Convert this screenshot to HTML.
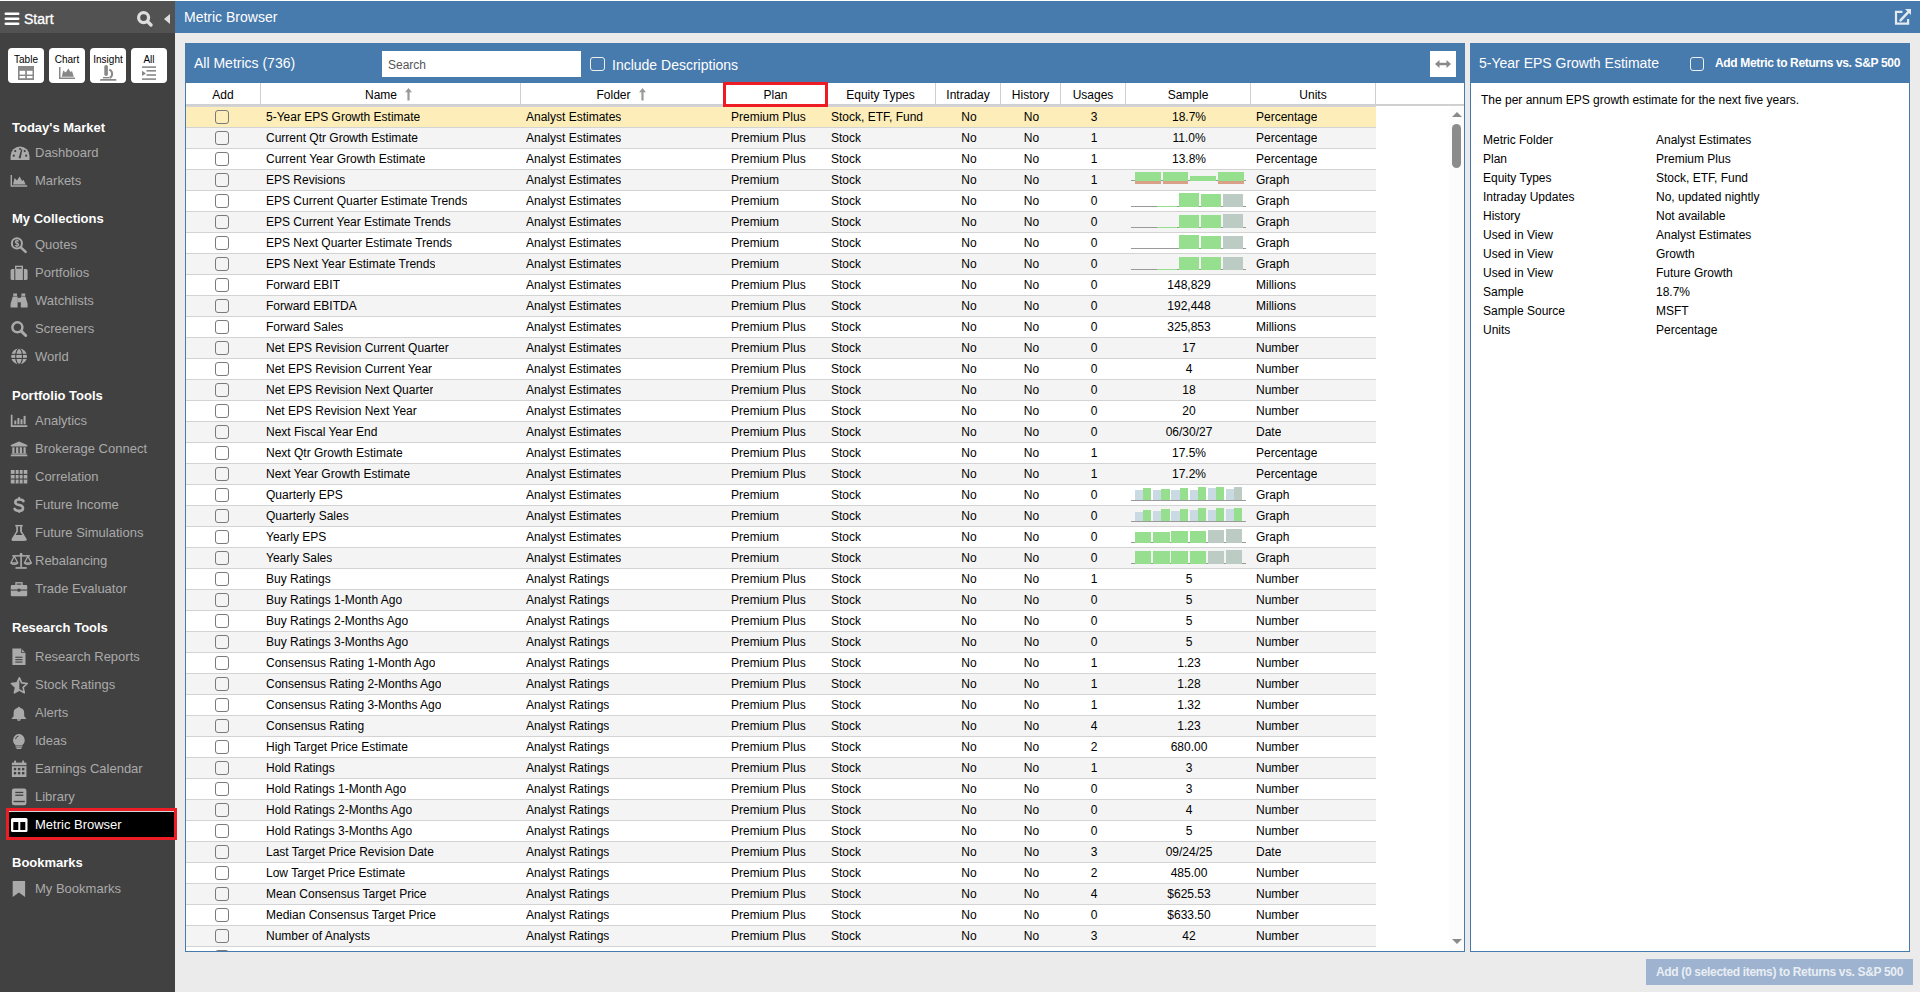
<!DOCTYPE html>
<html><head><meta charset="utf-8"><title>Metric Browser</title>
<style>
*{box-sizing:border-box}
html,body{margin:0;padding:0}
body{width:1920px;height:992px;overflow:hidden;background:#ebebeb;position:relative;font-family:"Liberation Sans",sans-serif;color:#222}
.a{position:absolute;white-space:nowrap}
#topline{position:absolute;left:0;top:0;width:1920px;height:1px;background:#fff}
#side{position:absolute;left:0;top:1px;width:175px;height:991px;background:#414141}
#sidehead{position:absolute;left:0;top:1px;width:175px;height:32px;background:#525252}
#titlebar{position:absolute;left:175px;top:1px;width:1745px;height:32px;background:#477aad}
.btn{position:absolute;top:48px;width:36px;height:35px;background:#fff;border-radius:4px}
.btn span{position:absolute;left:0;width:36px;top:6px;text-align:center;font-size:10px;line-height:12px;color:#000}
.btn svg{position:absolute;left:0;top:0}
.sh{position:absolute;left:12px;font-size:13px;font-weight:bold;color:#fff;line-height:15px}
.si{position:absolute;left:35px;font-size:13px;color:#aaa;line-height:15px}
.ic{position:absolute;left:0}
.panel{position:absolute;top:43px;height:909px;background:#fff;border:1px solid #477aad}
.phead{position:absolute;left:-1px;top:-1px;height:40px;background:#477aad}
.cb{position:absolute;width:14px;height:14px;border:1.5px solid #7a7a7a;border-radius:3px;background:transparent}
.cbw{position:absolute;width:15px;height:14px;border:1.5px solid #f0f0f0;border-radius:3px}
.row{position:absolute;left:186px;width:1190px;height:21px;border-bottom:1px solid #d3d3d3}
.c{position:absolute;top:0;height:20px;line-height:20px;font-size:12px;white-space:nowrap;overflow:hidden;color:#000}
.hd{position:absolute;top:85px;height:21px;line-height:21px;font-size:12px;text-align:center;color:#000}
.dv{position:absolute;top:83px;width:1px;height:21px;background:#cfcfcf}
.g{position:absolute;left:0;top:0}
.dl{position:absolute;left:1483px;font-size:12px;line-height:14px;color:#000}
.dr{position:absolute;left:1656px;font-size:12px;line-height:14px;color:#000}
</style></head><body>
<div id="topline"></div>
<div id="side"></div>
<div id="sidehead"></div>
<div id="titlebar"></div>

<svg class="a" style="left:4px;top:11px" width="16" height="15" viewBox="0 0 16 15">
<rect x="0.5" y="1.5" width="15" height="2.6" rx="1.3" fill="#fff"/><rect x="0.5" y="6.5" width="15" height="2.6" rx="1.3" fill="#fff"/><rect x="0.5" y="11.5" width="15" height="2.6" rx="1.3" fill="#fff"/></svg>
<div class="a" style="left:24px;top:11px;font-size:14px;line-height:16px;color:#fff;-webkit-text-stroke:0.3px #fff">Start</div>
<svg class="a" style="left:136px;top:10px" width="18" height="18" viewBox="0 0 18 18"><circle cx="7.6" cy="7.6" r="5" fill="none" stroke="#ddd" stroke-width="3.2"/><line x1="11.5" y1="11.5" x2="15" y2="15" stroke="#ddd" stroke-width="3.4" stroke-linecap="round"/></svg>
<svg class="a" style="left:163px;top:13px" width="8" height="12" viewBox="0 0 8 12"><path d="M7 1 L7 11 L1 6 Z" fill="#ddd"/></svg>

<div class="a" style="left:184px;top:9px;font-size:14px;line-height:16px;color:#fff">Metric Browser</div>
<svg class="a" style="left:1890px;top:5px" width="25" height="25" viewBox="0 0 25 25"><path d="M12.4 6.9 H6 V18.7 H18.1 V14" fill="none" stroke="#e3eaf2" stroke-width="2.2"/><path d="M15 4.1 H21 V9.9Z" fill="#e3eaf2"/><line x1="10.5" y1="15.3" x2="18" y2="7.3" stroke="#e3eaf2" stroke-width="2.5" stroke-linecap="round"/></svg>
<div class="btn" style="left:8px"><span>Table</span><svg width="36" height="35" viewBox="0 0 36 35"><rect x="10" y="18" width="16" height="14" fill="#888"/><rect x="11.6" y="22.8" width="5.6" height="3.8" fill="#fff"/><rect x="18.9" y="22.8" width="5.6" height="3.8" fill="#fff"/><rect x="11.6" y="28" width="5.6" height="2.2" fill="#fff"/><rect x="18.9" y="28" width="5.6" height="2.2" fill="#fff"/></svg></div>
<div class="btn" style="left:49px"><span>Chart</span><svg width="36" height="35" viewBox="0 0 36 35"><path d="M10 19 V31 H26 V29.6 H11.5 V19 Z" fill="#888"/><path d="M12.8 28.8 L14.2 22.5 L16.8 24.5 L19.3 20.5 L21.5 24 L23 23 L24.8 28.8 Z" fill="#888"/></svg></div>
<div class="btn" style="left:90px"><span>Insight</span><svg width="36" height="35" viewBox="0 0 36 35"><rect x="14.3" y="17" width="3.6" height="11" rx="1.8" fill="#888"/><path d="M19.3 21.6 A4.6 4.6 0 0 1 19.5 30" fill="none" stroke="#888" stroke-width="2"/><rect x="13" y="29" width="6" height="1.4" fill="#888"/><rect x="10" y="31" width="16.5" height="1.8" rx="0.9" fill="#888"/></svg></div>
<div class="btn" style="left:131px"><span>All</span><svg width="36" height="35" viewBox="0 0 36 35"><rect x="11" y="18.3" width="14" height="1.6" fill="#888"/><rect x="15.5" y="22" width="9.5" height="1.6" fill="#888"/><rect x="15.5" y="26.2" width="9.5" height="1.6" fill="#888"/><rect x="11" y="30.3" width="14" height="1.6" fill="#888"/><path d="M11 22.8 L15 25.4 L11 28Z" fill="#888"/></svg></div>
<div class="sh" style="top:120px">Today&#39;s Market</div>
<svg class="ic" style="top:142px" width="34" height="21" viewBox="0 -0.50 34 21"><path d="M10.6 17.5 V13.5 A9.45 9.45 0 0 1 29.5 13.5 V17.5 Z" fill="#aaa"/><circle cx="13.8" cy="13.2" r="1.1" fill="#414141"/><circle cx="15.3" cy="8.6" r="1.1" fill="#414141"/><circle cx="24.7" cy="8.6" r="1.1" fill="#414141"/><circle cx="26.2" cy="13.2" r="1.1" fill="#414141"/><circle cx="20" cy="6.5" r="1" fill="#414141"/><path d="M18.6 15.6 L21.2 6.8 L22.4 7.1 L20.6 16.1Z" fill="#414141"/></svg>
<div class="si" style="top:145px">Dashboard</div>
<svg class="ic" style="top:170px" width="34" height="21" viewBox="0 -0.50 34 21"><path d="M10.6 4.5 V16.3 H27.2 V14.8 H12 V4.5Z" fill="#aaa"/><path d="M13 14 L14.6 7.5 L17 10 L19.6 6 L22.2 10.6 L23.6 9.2 L25.6 14Z" fill="#aaa"/></svg>
<div class="si" style="top:173px">Markets</div>
<div class="sh" style="top:211px">My Collections</div>
<svg class="ic" style="top:234px" width="34" height="21" viewBox="0 -0.30 34 21"><circle cx="16.9" cy="9.1" r="5.05" fill="none" stroke="#aaa" stroke-width="2"/><line x1="20.6" y1="12.8" x2="25.6" y2="17.6" stroke="#aaa" stroke-width="2.6" stroke-linecap="round"/><path d="M18.6 7.2 Q18.2 6.4 16.9 6.4 Q15.4 6.4 15.4 7.6 Q15.4 8.6 16.9 8.9 Q18.6 9.3 18.6 10.5 Q18.6 11.8 16.9 11.8 Q15.5 11.8 15.1 11" fill="none" stroke="#aaa" stroke-width="1.2"/><rect x="16.45" y="5.3" width="0.9" height="7.6" fill="#aaa"/></svg>
<div class="si" style="top:237px">Quotes</div>
<svg class="ic" style="top:262px" width="34" height="21" viewBox="0 -0.30 34 21"><rect x="10.6" y="6.8" width="17" height="10.9" rx="1.6" fill="#aaa"/><rect x="15.7" y="4.1" width="6.6" height="3" fill="none" stroke="#aaa" stroke-width="1.4"/><rect x="14.3" y="6.8" width="1" height="10.9" fill="#414141"/><rect x="22.9" y="6.8" width="1" height="10.9" fill="#414141"/></svg>
<div class="si" style="top:265px">Portfolios</div>
<svg class="ic" style="top:290px" width="34" height="21" viewBox="0 -0.30 34 21"><rect x="13.2" y="3.2" width="3.8" height="2.4" fill="#aaa"/><rect x="21.4" y="3.2" width="3.8" height="2.4" fill="#aaa"/><path d="M12.8 6.2 H17.6 V17.3 H10.6 V13.4Z" fill="#aaa"/><path d="M20.8 6.2 H25.4 L27.6 13.4 V17.3 H20.8Z" fill="#aaa"/><rect x="17.4" y="7.6" width="3.6" height="4.4" fill="#aaa"/></svg>
<div class="si" style="top:293px">Watchlists</div>
<svg class="ic" style="top:318px" width="34" height="21" viewBox="0 -0.30 34 21"><circle cx="17.4" cy="9" r="5" fill="none" stroke="#aaa" stroke-width="2.5"/><line x1="21.2" y1="12.8" x2="25.7" y2="17.2" stroke="#aaa" stroke-width="3" stroke-linecap="round"/></svg>
<div class="si" style="top:321px">Screeners</div>
<svg class="ic" style="top:346px" width="34" height="21" viewBox="0 -0.50 34 21"><circle cx="19.1" cy="9.9" r="7.9" fill="#aaa"/><rect x="10" y="7.3" width="18" height="1.1" fill="#414141"/><rect x="10" y="11.4" width="18" height="1.1" fill="#414141"/><ellipse cx="19.1" cy="9.9" rx="3.4" ry="7.9" fill="none" stroke="#414141" stroke-width="1.1"/></svg>
<div class="si" style="top:349px">World</div>
<div class="sh" style="top:388px">Portfolio Tools</div>
<svg class="ic" style="top:410px" width="34" height="21" viewBox="0 -0.70 34 21"><path d="M10.8 4.1 V16.3 H27.3 V14.6 H12.5 V4.1Z" fill="#aaa"/><rect x="14.3" y="9.8" width="2" height="3.8" fill="#aaa"/><rect x="17.4" y="7.3" width="2" height="6.3" fill="#aaa"/><rect x="20.5" y="8.6" width="2" height="5" fill="#aaa"/><rect x="23.6" y="5.2" width="2" height="8.4" fill="#aaa"/></svg>
<div class="si" style="top:413px">Analytics</div>
<svg class="ic" style="top:438px" width="34" height="21" viewBox="0 -0.70 34 21"><path d="M19 2.8 L27.3 6.3 V7.7 H10.8 V6.3Z" fill="#aaa"/><rect x="12.3" y="8.6" width="2.2" height="5.8" fill="#aaa"/><rect x="16.1" y="8.6" width="2.2" height="5.8" fill="#aaa"/><rect x="19.8" y="8.6" width="2.2" height="5.8" fill="#aaa"/><rect x="23.5" y="8.6" width="2.2" height="5.8" fill="#aaa"/><rect x="11.5" y="14.6" width="15" height="1.2" fill="#aaa"/><rect x="10.8" y="16" width="16.5" height="1.6" fill="#aaa"/></svg>
<div class="si" style="top:441px">Brokerage Connect</div>
<svg class="ic" style="top:466px" width="34" height="21" viewBox="0 -0.70 34 21"><rect x="10.8" y="3.3" width="16.5" height="13.5" fill="#aaa"/><rect x="14.6" y="3" width="1.1" height="14" fill="#414141"/><rect x="18.6" y="3" width="1.1" height="14" fill="#414141"/><rect x="22.6" y="3" width="1.1" height="14" fill="#414141"/><rect x="10.5" y="7.2" width="17" height="1.1" fill="#414141"/><rect x="10.5" y="11.8" width="17" height="1.1" fill="#414141"/></svg>
<div class="si" style="top:469px">Correlation</div>
<svg class="ic" style="top:494px" width="34" height="21" viewBox="0 -0.70 34 21"><path d="M23.4 6.4 Q22.6 4.8 19.2 4.8 Q15.3 4.8 15.3 7.5 Q15.3 9.6 19.2 10.3 Q23 11 23 13.6 Q23 16.2 19.2 16.2 Q15.6 16.2 14.6 14.2" fill="none" stroke="#aaa" stroke-width="2.6" stroke-linecap="round"/><rect x="18.2" y="2" width="2" height="3" rx="1" fill="#aaa"/><rect x="18.2" y="15.6" width="2" height="2.8" rx="1" fill="#aaa"/></svg>
<div class="si" style="top:497px">Future Income</div>
<svg class="ic" style="top:522px" width="34" height="21" viewBox="0 -0.70 34 21"><rect x="15.3" y="2.2" width="7.4" height="1.7" fill="#aaa"/><path d="M16.3 3.9 H17.9 V8.6 L12 16.2 Q11.3 18.1 13.3 18.1 H24.7 Q26.7 18.1 26 16.2 L20.1 8.6 V3.9 H21.7 V8.6 L26.3 16 Q27.3 18.1 24.7 18.1" fill="#aaa"/><path d="M16.3 3.9 V8.6 L11.7 16 Q10.9 18.1 13.3 18.1 H24.7 Q27.1 18.1 26.3 16 L21.7 8.6 V3.9Z" fill="#aaa"/><path d="M17.9 3.9 V9 L15.5 12.2 H22.5 L20.1 9 V3.9Z" fill="#414141"/></svg>
<div class="si" style="top:525px">Future Simulations</div>
<svg class="ic" style="top:550px" width="34" height="21" viewBox="0 -0.70 34 21"><rect x="20.3" y="2.3" width="1.6" height="14" fill="#aaa"/><circle cx="21.1" cy="3.8" r="1.4" fill="#aaa"/><rect x="12.3" y="4.4" width="17.6" height="1.5" fill="#aaa"/><rect x="15.5" y="16.4" width="11.2" height="1.7" fill="#aaa"/><path d="M10.8 12.3 L14.3 5.6 L17.8 12.3 Q14.3 15.2 10.8 12.3Z" fill="none" stroke="#aaa" stroke-width="1.3" stroke-linejoin="round"/><path d="M24.4 12.3 L27.9 5.6 L31.4 12.3 Q27.9 15.2 24.4 12.3Z" fill="none" stroke="#aaa" stroke-width="1.3" stroke-linejoin="round"/><rect x="11" y="11.6" width="6.6" height="1.4" fill="#aaa"/><rect x="24.6" y="11.6" width="6.6" height="1.4" fill="#aaa"/></svg>
<div class="si" style="top:553px">Rebalancing</div>
<svg class="ic" style="top:578px" width="34" height="21" viewBox="0 -0.90 34 21"><rect x="10.8" y="6.2" width="16.4" height="11.1" rx="1" fill="#aaa"/><rect x="16" y="3.9" width="6" height="2.6" fill="none" stroke="#aaa" stroke-width="1.4"/><rect x="10.8" y="10.6" width="16.4" height="1.1" fill="#414141"/><rect x="17.6" y="9.8" width="2.8" height="2.9" fill="#414141"/></svg>
<div class="si" style="top:581px">Trade Evaluator</div>
<div class="sh" style="top:620px">Research Tools</div>
<svg class="ic" style="top:646px" width="34" height="21" viewBox="0 -0.70 34 21"><path d="M12.4 1.9 H21.2 L25.5 6.2 V18.3 H12.4Z" fill="#aaa"/><path d="M21.2 1.9 V6.2 H25.5Z" fill="#414141"/><path d="M21.9 2.7 L24.8 5.6 H21.9Z" fill="#aaa"/><rect x="15.3" y="10" width="7.2" height="1.1" fill="#414141"/><rect x="15.3" y="12.4" width="7.2" height="1.1" fill="#414141"/><rect x="15.3" y="14.8" width="7.2" height="1.1" fill="#414141"/></svg>
<div class="si" style="top:649px">Research Reports</div>
<svg class="ic" style="top:674px" width="34" height="21" viewBox="0 -0.60 34 21"><path d="M19.35 3.2 L21.7 8.3 L27.3 8.9 L23.1 12.7 L24.3 18.2 L19.35 15.4 L14.4 18.2 L15.6 12.7 L11.4 8.9 L17 8.3Z" fill="none" stroke="#aaa" stroke-width="1.6" stroke-linejoin="round"/><path d="M19.35 3.2 L17 8.3 L11.4 8.9 L15.6 12.7 L14.4 18.2 L19.35 15.4Z" fill="#aaa"/></svg>
<div class="si" style="top:677px">Stock Ratings</div>
<svg class="ic" style="top:702px" width="34" height="21" viewBox="0 -0.60 34 21"><path d="M18.9 4.1 Q19.9 4.1 20 5.2 Q24.2 6 24.2 10.6 V13.6 L26.5 16.4 H11.3 L13.6 13.6 V10.6 Q13.6 6 17.8 5.2 Q17.9 4.1 18.9 4.1Z" fill="#aaa"/><path d="M16.8 16.6 H21 Q20.6 18.4 18.9 18.4 Q17.2 18.4 16.8 16.6Z" fill="#aaa"/></svg>
<div class="si" style="top:705px">Alerts</div>
<svg class="ic" style="top:730px" width="34" height="21" viewBox="0 -0.60 34 21"><path d="M18.9 3.4 A6.2 6.2 0 0 1 22.6 14.2 V15 H15.2 V14.2 A6.2 6.2 0 0 1 18.9 3.4Z" fill="#aaa"/><path d="M15.6 8.6 A3.5 3.5 0 0 1 18.6 5.4" fill="none" stroke="#414141" stroke-width="1"/><rect x="15.5" y="15.6" width="6.8" height="1.3" rx="0.6" fill="#aaa"/><rect x="16.4" y="17.2" width="5" height="1.3" rx="0.6" fill="#aaa"/></svg>
<div class="si" style="top:733px">Ideas</div>
<svg class="ic" style="top:758px" width="34" height="21" viewBox="0 -0.60 34 21"><rect x="11.9" y="4" width="14.5" height="14.4" fill="#aaa"/><rect x="14.2" y="1.8" width="1.9" height="3.6" rx="0.6" fill="#aaa"/><rect x="22.2" y="1.8" width="1.9" height="3.6" rx="0.6" fill="#aaa"/><rect x="11.9" y="6.6" width="14.5" height="1" fill="#414141"/><rect x="13.8" y="9.3" width="2.4" height="2.4" fill="#414141"/><rect x="17.9" y="9.3" width="2.4" height="2.4" fill="#414141"/><rect x="22" y="9.3" width="2.4" height="2.4" fill="#414141"/><rect x="13.8" y="13.4" width="2.4" height="2.4" fill="#414141"/><rect x="17.9" y="13.4" width="2.4" height="2.4" fill="#414141"/><rect x="22" y="13.4" width="2.4" height="2.4" fill="#414141"/></svg>
<div class="si" style="top:761px">Earnings Calendar</div>
<svg class="ic" style="top:786px" width="34" height="21" viewBox="0 -0.60 34 21"><rect x="11.9" y="2" width="14.5" height="16.7" rx="2.2" fill="#aaa"/><rect x="15.3" y="5.2" width="8" height="1.3" fill="#414141"/><rect x="15.3" y="8" width="8" height="1.3" fill="#414141"/><rect x="13.6" y="14.2" width="11.2" height="1.4" fill="#414141"/></svg>
<div class="si" style="top:789px">Library</div>
<div class="a" style="left:6px;top:808px;width:171px;height:32px;border:3px solid #ee1c25;background:#000"><div style="position:absolute;left:0;top:0;width:165px;height:1px;background:#cfd8dc"></div></div>
<svg class="a" style="left:11px;top:818px" width="17" height="14" viewBox="0 0 17 14"><rect x="0" y="0" width="16.5" height="14" rx="1.5" fill="#fff"/><rect x="2.3" y="4" width="5" height="8" fill="#000"/><rect x="9.3" y="4" width="5" height="8" fill="#000"/></svg>
<div class="si" style="top:817px;color:#fff">Metric Browser</div>
<div class="sh" style="top:855px">Bookmarks</div>
<svg class="ic" style="top:878px" width="34" height="21" viewBox="0 -0.40 34 21"><path d="M12.7 2.6 H25.1 V18.6 L18.9 14.2 L12.7 18.6Z" fill="#aaa"/></svg>
<div class="si" style="top:881px">My Bookmarks</div>
<div class="panel" style="left:185px;width:1280px"></div>
<div class="a" style="left:185px;top:43px;width:1280px;height:40px;background:#477aad"></div>
<div class="a" style="left:194px;top:55px;font-size:14px;line-height:16px;color:#fff">All Metrics (736)</div>
<div class="a" style="left:382px;top:51px;width:199px;height:26px;background:#fff"></div>
<div class="a" style="left:388px;top:58px;font-size:12px;line-height:14px;color:#555">Search</div>
<div class="cbw" style="left:590px;top:57px"></div>
<div class="a" style="left:612px;top:57px;font-size:14px;line-height:16px;color:#fff">Include Descriptions</div>
<div class="a" style="left:1430px;top:51px;width:26px;height:26px;background:#fff"></div>
<svg class="a" style="left:1434px;top:58px" width="18" height="12" viewBox="0 0 18 12"><path d="M1 6 L5.5 2 V4.8 H12.5 V2 L17 6 L12.5 10 V7.2 H5.5 V10Z" fill="#8a8a8a"/></svg>
<div class="a" style="left:186px;top:83px;width:1278px;height:21px;background:#fff"></div>
<div class="a" style="left:186px;top:104px;width:1278px;height:2px;background:#d0d0d0"></div>
<div class="a" style="left:186px;top:106px;width:1190px;height:1px;background:#d4d5da"></div>
<div class="hd" style="left:186px;width:74px">Add</div>
<div class="dv" style="left:260px"></div>
<div class="hd" style="left:261px;width:259px">Name<span style="display:inline-block;width:19px;height:12px;position:relative"><svg style="position:absolute;left:8px;top:1px" width="8" height="13" viewBox="0 0 8 13"><path d="M3.5 0 L7 4.2 H4.6 V12.5 H2.4 V4.2 H0Z" fill="#999"/></svg></span></div>
<div class="dv" style="left:520px"></div>
<div class="hd" style="left:521px;width:204px">Folder<span style="display:inline-block;width:19px;height:12px;position:relative"><svg style="position:absolute;left:8px;top:1px" width="8" height="13" viewBox="0 0 8 13"><path d="M3.5 0 L7 4.2 H4.6 V12.5 H2.4 V4.2 H0Z" fill="#999"/></svg></span></div>
<div class="dv" style="left:725px"></div>
<div class="hd" style="left:726px;width:99px">Plan</div>
<div class="dv" style="left:825px"></div>
<div class="hd" style="left:826px;width:109px">Equity Types</div>
<div class="dv" style="left:935px"></div>
<div class="hd" style="left:936px;width:64px">Intraday</div>
<div class="dv" style="left:1000px"></div>
<div class="hd" style="left:1001px;width:59px">History</div>
<div class="dv" style="left:1060px"></div>
<div class="hd" style="left:1061px;width:64px">Usages</div>
<div class="dv" style="left:1125px"></div>
<div class="hd" style="left:1126px;width:124px">Sample</div>
<div class="dv" style="left:1250px"></div>
<div class="hd" style="left:1251px;width:124px">Units</div>
<div class="dv" style="left:1375px"></div>
<div class="row" style="top:107px;background:#fcedb9"><div class="cb" style="left:29px;top:3px"></div><div class="c" style="left:80px">5-Year EPS Growth Estimate</div><div class="c" style="left:340px">Analyst Estimates</div><div class="c" style="left:545px">Premium Plus</div><div class="c" style="left:645px">Stock, ETF, Fund</div><div class="c" style="left:751px;width:64px;text-align:center">No</div><div class="c" style="left:816px;width:59px;text-align:center">No</div><div class="c" style="left:876px;width:64px;text-align:center">3</div><div class="c" style="left:941px;width:124px;text-align:center">18.7%</div><div class="c" style="left:1070px">Percentage</div></div>
<div class="row" style="top:128px;background:#f4f4f4"><div class="cb" style="left:29px;top:3px"></div><div class="c" style="left:80px">Current Qtr Growth Estimate</div><div class="c" style="left:340px">Analyst Estimates</div><div class="c" style="left:545px">Premium Plus</div><div class="c" style="left:645px">Stock</div><div class="c" style="left:751px;width:64px;text-align:center">No</div><div class="c" style="left:816px;width:59px;text-align:center">No</div><div class="c" style="left:876px;width:64px;text-align:center">1</div><div class="c" style="left:941px;width:124px;text-align:center">11.0%</div><div class="c" style="left:1070px">Percentage</div></div>
<div class="row" style="top:149px;background:#fff"><div class="cb" style="left:29px;top:3px"></div><div class="c" style="left:80px">Current Year Growth Estimate</div><div class="c" style="left:340px">Analyst Estimates</div><div class="c" style="left:545px">Premium Plus</div><div class="c" style="left:645px">Stock</div><div class="c" style="left:751px;width:64px;text-align:center">No</div><div class="c" style="left:816px;width:59px;text-align:center">No</div><div class="c" style="left:876px;width:64px;text-align:center">1</div><div class="c" style="left:941px;width:124px;text-align:center">13.8%</div><div class="c" style="left:1070px">Percentage</div></div>
<div class="row" style="top:170px;background:#f4f4f4"><div class="cb" style="left:29px;top:3px"></div><div class="c" style="left:80px">EPS Revisions</div><div class="c" style="left:340px">Analyst Estimates</div><div class="c" style="left:545px">Premium</div><div class="c" style="left:645px">Stock</div><div class="c" style="left:751px;width:64px;text-align:center">No</div><div class="c" style="left:816px;width:59px;text-align:center">No</div><div class="c" style="left:876px;width:64px;text-align:center">1</div><div class="c" style="left:940px;width:124px;height:21px"><svg class="g" width="124" height="21" viewBox="0 0 124 21" shape-rendering="crispEdges"><rect x="5" y="10" width="115" height="1" fill="#9a9a9a"/><rect x="9" y="2" width="26" height="9" fill="#96df8e"/><rect x="9" y="11" width="26" height="3" fill="#d9a088"/><rect x="37" y="2" width="25" height="9" fill="#96df8e"/><rect x="37" y="11" width="25" height="3" fill="#d9a088"/><rect x="64" y="6" width="26" height="5" fill="#96df8e"/><rect x="92" y="2" width="26" height="9" fill="#96df8e"/><rect x="92" y="11" width="26" height="3" fill="#d9a088"/></svg></div><div class="c" style="left:1070px">Graph</div></div>
<div class="row" style="top:191px;background:#fff"><div class="cb" style="left:29px;top:3px"></div><div class="c" style="left:80px">EPS Current Quarter Estimate Trends</div><div class="c" style="left:340px">Analyst Estimates</div><div class="c" style="left:545px">Premium</div><div class="c" style="left:645px">Stock</div><div class="c" style="left:751px;width:64px;text-align:center">No</div><div class="c" style="left:816px;width:59px;text-align:center">No</div><div class="c" style="left:876px;width:64px;text-align:center">0</div><div class="c" style="left:940px;width:124px;height:21px"><svg class="g" width="124" height="21" viewBox="0 0 124 21" shape-rendering="crispEdges"><rect x="5" y="15" width="115" height="1" fill="#9a9a9a"/><rect x="31" y="15" width="20" height="1" fill="#96df8e"/><rect x="53" y="2" width="20" height="14" fill="#96df8e"/><rect x="75" y="3" width="20" height="13" fill="#96df8e"/><rect x="97" y="3" width="20" height="13" fill="#bccbc3"/></svg></div><div class="c" style="left:1070px">Graph</div></div>
<div class="row" style="top:212px;background:#f4f4f4"><div class="cb" style="left:29px;top:3px"></div><div class="c" style="left:80px">EPS Current Year Estimate Trends</div><div class="c" style="left:340px">Analyst Estimates</div><div class="c" style="left:545px">Premium</div><div class="c" style="left:645px">Stock</div><div class="c" style="left:751px;width:64px;text-align:center">No</div><div class="c" style="left:816px;width:59px;text-align:center">No</div><div class="c" style="left:876px;width:64px;text-align:center">0</div><div class="c" style="left:940px;width:124px;height:21px"><svg class="g" width="124" height="21" viewBox="0 0 124 21" shape-rendering="crispEdges"><rect x="5" y="15" width="115" height="1" fill="#9a9a9a"/><rect x="31" y="15" width="20" height="1" fill="#96df8e"/><rect x="53" y="3" width="20" height="13" fill="#96df8e"/><rect x="75" y="3" width="20" height="13" fill="#96df8e"/><rect x="97" y="2" width="20" height="14" fill="#bccbc3"/></svg></div><div class="c" style="left:1070px">Graph</div></div>
<div class="row" style="top:233px;background:#fff"><div class="cb" style="left:29px;top:3px"></div><div class="c" style="left:80px">EPS Next Quarter Estimate Trends</div><div class="c" style="left:340px">Analyst Estimates</div><div class="c" style="left:545px">Premium</div><div class="c" style="left:645px">Stock</div><div class="c" style="left:751px;width:64px;text-align:center">No</div><div class="c" style="left:816px;width:59px;text-align:center">No</div><div class="c" style="left:876px;width:64px;text-align:center">0</div><div class="c" style="left:940px;width:124px;height:21px"><svg class="g" width="124" height="21" viewBox="0 0 124 21" shape-rendering="crispEdges"><rect x="5" y="15" width="115" height="1" fill="#9a9a9a"/><rect x="53" y="2" width="20" height="14" fill="#96df8e"/><rect x="75" y="3" width="20" height="13" fill="#96df8e"/><rect x="97" y="3" width="20" height="13" fill="#bccbc3"/></svg></div><div class="c" style="left:1070px">Graph</div></div>
<div class="row" style="top:254px;background:#f4f4f4"><div class="cb" style="left:29px;top:3px"></div><div class="c" style="left:80px">EPS Next Year Estimate Trends</div><div class="c" style="left:340px">Analyst Estimates</div><div class="c" style="left:545px">Premium</div><div class="c" style="left:645px">Stock</div><div class="c" style="left:751px;width:64px;text-align:center">No</div><div class="c" style="left:816px;width:59px;text-align:center">No</div><div class="c" style="left:876px;width:64px;text-align:center">0</div><div class="c" style="left:940px;width:124px;height:21px"><svg class="g" width="124" height="21" viewBox="0 0 124 21" shape-rendering="crispEdges"><rect x="5" y="15" width="115" height="1" fill="#9a9a9a"/><rect x="31" y="15" width="20" height="1" fill="#96df8e"/><rect x="53" y="3" width="20" height="13" fill="#96df8e"/><rect x="75" y="3" width="20" height="13" fill="#96df8e"/><rect x="97" y="3" width="20" height="13" fill="#bccbc3"/></svg></div><div class="c" style="left:1070px">Graph</div></div>
<div class="row" style="top:275px;background:#fff"><div class="cb" style="left:29px;top:3px"></div><div class="c" style="left:80px">Forward EBIT</div><div class="c" style="left:340px">Analyst Estimates</div><div class="c" style="left:545px">Premium Plus</div><div class="c" style="left:645px">Stock</div><div class="c" style="left:751px;width:64px;text-align:center">No</div><div class="c" style="left:816px;width:59px;text-align:center">No</div><div class="c" style="left:876px;width:64px;text-align:center">0</div><div class="c" style="left:941px;width:124px;text-align:center">148,829</div><div class="c" style="left:1070px">Millions</div></div>
<div class="row" style="top:296px;background:#f4f4f4"><div class="cb" style="left:29px;top:3px"></div><div class="c" style="left:80px">Forward EBITDA</div><div class="c" style="left:340px">Analyst Estimates</div><div class="c" style="left:545px">Premium Plus</div><div class="c" style="left:645px">Stock</div><div class="c" style="left:751px;width:64px;text-align:center">No</div><div class="c" style="left:816px;width:59px;text-align:center">No</div><div class="c" style="left:876px;width:64px;text-align:center">0</div><div class="c" style="left:941px;width:124px;text-align:center">192,448</div><div class="c" style="left:1070px">Millions</div></div>
<div class="row" style="top:317px;background:#fff"><div class="cb" style="left:29px;top:3px"></div><div class="c" style="left:80px">Forward Sales</div><div class="c" style="left:340px">Analyst Estimates</div><div class="c" style="left:545px">Premium Plus</div><div class="c" style="left:645px">Stock</div><div class="c" style="left:751px;width:64px;text-align:center">No</div><div class="c" style="left:816px;width:59px;text-align:center">No</div><div class="c" style="left:876px;width:64px;text-align:center">0</div><div class="c" style="left:941px;width:124px;text-align:center">325,853</div><div class="c" style="left:1070px">Millions</div></div>
<div class="row" style="top:338px;background:#f4f4f4"><div class="cb" style="left:29px;top:3px"></div><div class="c" style="left:80px">Net EPS Revision Current Quarter</div><div class="c" style="left:340px">Analyst Estimates</div><div class="c" style="left:545px">Premium Plus</div><div class="c" style="left:645px">Stock</div><div class="c" style="left:751px;width:64px;text-align:center">No</div><div class="c" style="left:816px;width:59px;text-align:center">No</div><div class="c" style="left:876px;width:64px;text-align:center">0</div><div class="c" style="left:941px;width:124px;text-align:center">17</div><div class="c" style="left:1070px">Number</div></div>
<div class="row" style="top:359px;background:#fff"><div class="cb" style="left:29px;top:3px"></div><div class="c" style="left:80px">Net EPS Revision Current Year</div><div class="c" style="left:340px">Analyst Estimates</div><div class="c" style="left:545px">Premium Plus</div><div class="c" style="left:645px">Stock</div><div class="c" style="left:751px;width:64px;text-align:center">No</div><div class="c" style="left:816px;width:59px;text-align:center">No</div><div class="c" style="left:876px;width:64px;text-align:center">0</div><div class="c" style="left:941px;width:124px;text-align:center">4</div><div class="c" style="left:1070px">Number</div></div>
<div class="row" style="top:380px;background:#f4f4f4"><div class="cb" style="left:29px;top:3px"></div><div class="c" style="left:80px">Net EPS Revision Next Quarter</div><div class="c" style="left:340px">Analyst Estimates</div><div class="c" style="left:545px">Premium Plus</div><div class="c" style="left:645px">Stock</div><div class="c" style="left:751px;width:64px;text-align:center">No</div><div class="c" style="left:816px;width:59px;text-align:center">No</div><div class="c" style="left:876px;width:64px;text-align:center">0</div><div class="c" style="left:941px;width:124px;text-align:center">18</div><div class="c" style="left:1070px">Number</div></div>
<div class="row" style="top:401px;background:#fff"><div class="cb" style="left:29px;top:3px"></div><div class="c" style="left:80px">Net EPS Revision Next Year</div><div class="c" style="left:340px">Analyst Estimates</div><div class="c" style="left:545px">Premium Plus</div><div class="c" style="left:645px">Stock</div><div class="c" style="left:751px;width:64px;text-align:center">No</div><div class="c" style="left:816px;width:59px;text-align:center">No</div><div class="c" style="left:876px;width:64px;text-align:center">0</div><div class="c" style="left:941px;width:124px;text-align:center">20</div><div class="c" style="left:1070px">Number</div></div>
<div class="row" style="top:422px;background:#f4f4f4"><div class="cb" style="left:29px;top:3px"></div><div class="c" style="left:80px">Next Fiscal Year End</div><div class="c" style="left:340px">Analyst Estimates</div><div class="c" style="left:545px">Premium Plus</div><div class="c" style="left:645px">Stock</div><div class="c" style="left:751px;width:64px;text-align:center">No</div><div class="c" style="left:816px;width:59px;text-align:center">No</div><div class="c" style="left:876px;width:64px;text-align:center">0</div><div class="c" style="left:941px;width:124px;text-align:center">06/30/27</div><div class="c" style="left:1070px">Date</div></div>
<div class="row" style="top:443px;background:#fff"><div class="cb" style="left:29px;top:3px"></div><div class="c" style="left:80px">Next Qtr Growth Estimate</div><div class="c" style="left:340px">Analyst Estimates</div><div class="c" style="left:545px">Premium Plus</div><div class="c" style="left:645px">Stock</div><div class="c" style="left:751px;width:64px;text-align:center">No</div><div class="c" style="left:816px;width:59px;text-align:center">No</div><div class="c" style="left:876px;width:64px;text-align:center">1</div><div class="c" style="left:941px;width:124px;text-align:center">17.5%</div><div class="c" style="left:1070px">Percentage</div></div>
<div class="row" style="top:464px;background:#f4f4f4"><div class="cb" style="left:29px;top:3px"></div><div class="c" style="left:80px">Next Year Growth Estimate</div><div class="c" style="left:340px">Analyst Estimates</div><div class="c" style="left:545px">Premium Plus</div><div class="c" style="left:645px">Stock</div><div class="c" style="left:751px;width:64px;text-align:center">No</div><div class="c" style="left:816px;width:59px;text-align:center">No</div><div class="c" style="left:876px;width:64px;text-align:center">1</div><div class="c" style="left:941px;width:124px;text-align:center">17.2%</div><div class="c" style="left:1070px">Percentage</div></div>
<div class="row" style="top:485px;background:#fff"><div class="cb" style="left:29px;top:3px"></div><div class="c" style="left:80px">Quarterly EPS</div><div class="c" style="left:340px">Analyst Estimates</div><div class="c" style="left:545px">Premium</div><div class="c" style="left:645px">Stock</div><div class="c" style="left:751px;width:64px;text-align:center">No</div><div class="c" style="left:816px;width:59px;text-align:center">No</div><div class="c" style="left:876px;width:64px;text-align:center">0</div><div class="c" style="left:940px;width:124px;height:21px"><svg class="g" width="124" height="21" viewBox="0 0 124 21" shape-rendering="crispEdges"><rect x="5" y="15" width="115" height="1" fill="#9a9a9a"/><rect x="9" y="5" width="8" height="10" fill="#c9dae3"/><rect x="17" y="3" width="8" height="12" fill="#96df8e"/><rect x="27" y="5" width="8" height="10" fill="#c9dae3"/><rect x="35" y="4" width="9" height="11" fill="#96df8e"/><rect x="45" y="5" width="9" height="10" fill="#c9dae3"/><rect x="54" y="3" width="8" height="12" fill="#96df8e"/><rect x="64" y="5" width="8" height="10" fill="#c9dae3"/><rect x="72" y="2" width="8" height="13" fill="#96df8e"/><rect x="82" y="3" width="8" height="12" fill="#c9dae3"/><rect x="90" y="2" width="8" height="13" fill="#96df8e"/><rect x="100" y="4" width="8" height="11" fill="#c9dae3"/><rect x="108" y="2" width="8" height="13" fill="#bccbc3"/></svg></div><div class="c" style="left:1070px">Graph</div></div>
<div class="row" style="top:506px;background:#f4f4f4"><div class="cb" style="left:29px;top:3px"></div><div class="c" style="left:80px">Quarterly Sales</div><div class="c" style="left:340px">Analyst Estimates</div><div class="c" style="left:545px">Premium</div><div class="c" style="left:645px">Stock</div><div class="c" style="left:751px;width:64px;text-align:center">No</div><div class="c" style="left:816px;width:59px;text-align:center">No</div><div class="c" style="left:876px;width:64px;text-align:center">0</div><div class="c" style="left:940px;width:124px;height:21px"><svg class="g" width="124" height="21" viewBox="0 0 124 21" shape-rendering="crispEdges"><rect x="5" y="15" width="115" height="1" fill="#9a9a9a"/><rect x="9" y="6" width="8" height="9" fill="#c9dae3"/><rect x="17" y="4" width="8" height="11" fill="#96df8e"/><rect x="27" y="5" width="8" height="10" fill="#c9dae3"/><rect x="35" y="3" width="9" height="12" fill="#96df8e"/><rect x="45" y="5" width="9" height="10" fill="#c9dae3"/><rect x="54" y="3" width="8" height="12" fill="#96df8e"/><rect x="64" y="4" width="8" height="11" fill="#c9dae3"/><rect x="72" y="2" width="8" height="13" fill="#96df8e"/><rect x="82" y="4" width="8" height="11" fill="#c9dae3"/><rect x="90" y="2" width="8" height="13" fill="#96df8e"/><rect x="100" y="3" width="8" height="12" fill="#c9dae3"/><rect x="108" y="2" width="8" height="13" fill="#96df8e"/></svg></div><div class="c" style="left:1070px">Graph</div></div>
<div class="row" style="top:527px;background:#fff"><div class="cb" style="left:29px;top:3px"></div><div class="c" style="left:80px">Yearly EPS</div><div class="c" style="left:340px">Analyst Estimates</div><div class="c" style="left:545px">Premium</div><div class="c" style="left:645px">Stock</div><div class="c" style="left:751px;width:64px;text-align:center">No</div><div class="c" style="left:816px;width:59px;text-align:center">No</div><div class="c" style="left:876px;width:64px;text-align:center">0</div><div class="c" style="left:940px;width:124px;height:21px"><svg class="g" width="124" height="21" viewBox="0 0 124 21" shape-rendering="crispEdges"><rect x="5" y="15" width="115" height="1" fill="#9a9a9a"/><rect x="9" y="5" width="16" height="11" fill="#96df8e"/><rect x="27" y="5" width="17" height="11" fill="#96df8e"/><rect x="45" y="4" width="17" height="12" fill="#96df8e"/><rect x="64" y="4" width="16" height="12" fill="#96df8e"/><rect x="82" y="3" width="16" height="13" fill="#bccbc3"/><rect x="100" y="2" width="16" height="14" fill="#bccbc3"/></svg></div><div class="c" style="left:1070px">Graph</div></div>
<div class="row" style="top:548px;background:#f4f4f4"><div class="cb" style="left:29px;top:3px"></div><div class="c" style="left:80px">Yearly Sales</div><div class="c" style="left:340px">Analyst Estimates</div><div class="c" style="left:545px">Premium</div><div class="c" style="left:645px">Stock</div><div class="c" style="left:751px;width:64px;text-align:center">No</div><div class="c" style="left:816px;width:59px;text-align:center">No</div><div class="c" style="left:876px;width:64px;text-align:center">0</div><div class="c" style="left:940px;width:124px;height:21px"><svg class="g" width="124" height="21" viewBox="0 0 124 21" shape-rendering="crispEdges"><rect x="5" y="15" width="115" height="1" fill="#9a9a9a"/><rect x="9" y="3" width="16" height="13" fill="#96df8e"/><rect x="27" y="3" width="17" height="13" fill="#96df8e"/><rect x="45" y="3" width="17" height="13" fill="#96df8e"/><rect x="64" y="3" width="16" height="13" fill="#96df8e"/><rect x="82" y="3" width="16" height="13" fill="#bccbc3"/><rect x="100" y="2" width="16" height="14" fill="#bccbc3"/></svg></div><div class="c" style="left:1070px">Graph</div></div>
<div class="row" style="top:569px;background:#fff"><div class="cb" style="left:29px;top:3px"></div><div class="c" style="left:80px">Buy Ratings</div><div class="c" style="left:340px">Analyst Ratings</div><div class="c" style="left:545px">Premium Plus</div><div class="c" style="left:645px">Stock</div><div class="c" style="left:751px;width:64px;text-align:center">No</div><div class="c" style="left:816px;width:59px;text-align:center">No</div><div class="c" style="left:876px;width:64px;text-align:center">1</div><div class="c" style="left:941px;width:124px;text-align:center">5</div><div class="c" style="left:1070px">Number</div></div>
<div class="row" style="top:590px;background:#f4f4f4"><div class="cb" style="left:29px;top:3px"></div><div class="c" style="left:80px">Buy Ratings 1-Month Ago</div><div class="c" style="left:340px">Analyst Ratings</div><div class="c" style="left:545px">Premium Plus</div><div class="c" style="left:645px">Stock</div><div class="c" style="left:751px;width:64px;text-align:center">No</div><div class="c" style="left:816px;width:59px;text-align:center">No</div><div class="c" style="left:876px;width:64px;text-align:center">0</div><div class="c" style="left:941px;width:124px;text-align:center">5</div><div class="c" style="left:1070px">Number</div></div>
<div class="row" style="top:611px;background:#fff"><div class="cb" style="left:29px;top:3px"></div><div class="c" style="left:80px">Buy Ratings 2-Months Ago</div><div class="c" style="left:340px">Analyst Ratings</div><div class="c" style="left:545px">Premium Plus</div><div class="c" style="left:645px">Stock</div><div class="c" style="left:751px;width:64px;text-align:center">No</div><div class="c" style="left:816px;width:59px;text-align:center">No</div><div class="c" style="left:876px;width:64px;text-align:center">0</div><div class="c" style="left:941px;width:124px;text-align:center">5</div><div class="c" style="left:1070px">Number</div></div>
<div class="row" style="top:632px;background:#f4f4f4"><div class="cb" style="left:29px;top:3px"></div><div class="c" style="left:80px">Buy Ratings 3-Months Ago</div><div class="c" style="left:340px">Analyst Ratings</div><div class="c" style="left:545px">Premium Plus</div><div class="c" style="left:645px">Stock</div><div class="c" style="left:751px;width:64px;text-align:center">No</div><div class="c" style="left:816px;width:59px;text-align:center">No</div><div class="c" style="left:876px;width:64px;text-align:center">0</div><div class="c" style="left:941px;width:124px;text-align:center">5</div><div class="c" style="left:1070px">Number</div></div>
<div class="row" style="top:653px;background:#fff"><div class="cb" style="left:29px;top:3px"></div><div class="c" style="left:80px">Consensus Rating 1-Month Ago</div><div class="c" style="left:340px">Analyst Ratings</div><div class="c" style="left:545px">Premium Plus</div><div class="c" style="left:645px">Stock</div><div class="c" style="left:751px;width:64px;text-align:center">No</div><div class="c" style="left:816px;width:59px;text-align:center">No</div><div class="c" style="left:876px;width:64px;text-align:center">1</div><div class="c" style="left:941px;width:124px;text-align:center">1.23</div><div class="c" style="left:1070px">Number</div></div>
<div class="row" style="top:674px;background:#f4f4f4"><div class="cb" style="left:29px;top:3px"></div><div class="c" style="left:80px">Consensus Rating 2-Months Ago</div><div class="c" style="left:340px">Analyst Ratings</div><div class="c" style="left:545px">Premium Plus</div><div class="c" style="left:645px">Stock</div><div class="c" style="left:751px;width:64px;text-align:center">No</div><div class="c" style="left:816px;width:59px;text-align:center">No</div><div class="c" style="left:876px;width:64px;text-align:center">1</div><div class="c" style="left:941px;width:124px;text-align:center">1.28</div><div class="c" style="left:1070px">Number</div></div>
<div class="row" style="top:695px;background:#fff"><div class="cb" style="left:29px;top:3px"></div><div class="c" style="left:80px">Consensus Rating 3-Months Ago</div><div class="c" style="left:340px">Analyst Ratings</div><div class="c" style="left:545px">Premium Plus</div><div class="c" style="left:645px">Stock</div><div class="c" style="left:751px;width:64px;text-align:center">No</div><div class="c" style="left:816px;width:59px;text-align:center">No</div><div class="c" style="left:876px;width:64px;text-align:center">1</div><div class="c" style="left:941px;width:124px;text-align:center">1.32</div><div class="c" style="left:1070px">Number</div></div>
<div class="row" style="top:716px;background:#f4f4f4"><div class="cb" style="left:29px;top:3px"></div><div class="c" style="left:80px">Consensus Rating</div><div class="c" style="left:340px">Analyst Ratings</div><div class="c" style="left:545px">Premium Plus</div><div class="c" style="left:645px">Stock</div><div class="c" style="left:751px;width:64px;text-align:center">No</div><div class="c" style="left:816px;width:59px;text-align:center">No</div><div class="c" style="left:876px;width:64px;text-align:center">4</div><div class="c" style="left:941px;width:124px;text-align:center">1.23</div><div class="c" style="left:1070px">Number</div></div>
<div class="row" style="top:737px;background:#fff"><div class="cb" style="left:29px;top:3px"></div><div class="c" style="left:80px">High Target Price Estimate</div><div class="c" style="left:340px">Analyst Ratings</div><div class="c" style="left:545px">Premium Plus</div><div class="c" style="left:645px">Stock</div><div class="c" style="left:751px;width:64px;text-align:center">No</div><div class="c" style="left:816px;width:59px;text-align:center">No</div><div class="c" style="left:876px;width:64px;text-align:center">2</div><div class="c" style="left:941px;width:124px;text-align:center">680.00</div><div class="c" style="left:1070px">Number</div></div>
<div class="row" style="top:758px;background:#f4f4f4"><div class="cb" style="left:29px;top:3px"></div><div class="c" style="left:80px">Hold Ratings</div><div class="c" style="left:340px">Analyst Ratings</div><div class="c" style="left:545px">Premium Plus</div><div class="c" style="left:645px">Stock</div><div class="c" style="left:751px;width:64px;text-align:center">No</div><div class="c" style="left:816px;width:59px;text-align:center">No</div><div class="c" style="left:876px;width:64px;text-align:center">1</div><div class="c" style="left:941px;width:124px;text-align:center">3</div><div class="c" style="left:1070px">Number</div></div>
<div class="row" style="top:779px;background:#fff"><div class="cb" style="left:29px;top:3px"></div><div class="c" style="left:80px">Hold Ratings 1-Month Ago</div><div class="c" style="left:340px">Analyst Ratings</div><div class="c" style="left:545px">Premium Plus</div><div class="c" style="left:645px">Stock</div><div class="c" style="left:751px;width:64px;text-align:center">No</div><div class="c" style="left:816px;width:59px;text-align:center">No</div><div class="c" style="left:876px;width:64px;text-align:center">0</div><div class="c" style="left:941px;width:124px;text-align:center">3</div><div class="c" style="left:1070px">Number</div></div>
<div class="row" style="top:800px;background:#f4f4f4"><div class="cb" style="left:29px;top:3px"></div><div class="c" style="left:80px">Hold Ratings 2-Months Ago</div><div class="c" style="left:340px">Analyst Ratings</div><div class="c" style="left:545px">Premium Plus</div><div class="c" style="left:645px">Stock</div><div class="c" style="left:751px;width:64px;text-align:center">No</div><div class="c" style="left:816px;width:59px;text-align:center">No</div><div class="c" style="left:876px;width:64px;text-align:center">0</div><div class="c" style="left:941px;width:124px;text-align:center">4</div><div class="c" style="left:1070px">Number</div></div>
<div class="row" style="top:821px;background:#fff"><div class="cb" style="left:29px;top:3px"></div><div class="c" style="left:80px">Hold Ratings 3-Months Ago</div><div class="c" style="left:340px">Analyst Ratings</div><div class="c" style="left:545px">Premium Plus</div><div class="c" style="left:645px">Stock</div><div class="c" style="left:751px;width:64px;text-align:center">No</div><div class="c" style="left:816px;width:59px;text-align:center">No</div><div class="c" style="left:876px;width:64px;text-align:center">0</div><div class="c" style="left:941px;width:124px;text-align:center">5</div><div class="c" style="left:1070px">Number</div></div>
<div class="row" style="top:842px;background:#f4f4f4"><div class="cb" style="left:29px;top:3px"></div><div class="c" style="left:80px">Last Target Price Revision Date</div><div class="c" style="left:340px">Analyst Ratings</div><div class="c" style="left:545px">Premium Plus</div><div class="c" style="left:645px">Stock</div><div class="c" style="left:751px;width:64px;text-align:center">No</div><div class="c" style="left:816px;width:59px;text-align:center">No</div><div class="c" style="left:876px;width:64px;text-align:center">3</div><div class="c" style="left:941px;width:124px;text-align:center">09/24/25</div><div class="c" style="left:1070px">Date</div></div>
<div class="row" style="top:863px;background:#fff"><div class="cb" style="left:29px;top:3px"></div><div class="c" style="left:80px">Low Target Price Estimate</div><div class="c" style="left:340px">Analyst Ratings</div><div class="c" style="left:545px">Premium Plus</div><div class="c" style="left:645px">Stock</div><div class="c" style="left:751px;width:64px;text-align:center">No</div><div class="c" style="left:816px;width:59px;text-align:center">No</div><div class="c" style="left:876px;width:64px;text-align:center">2</div><div class="c" style="left:941px;width:124px;text-align:center">485.00</div><div class="c" style="left:1070px">Number</div></div>
<div class="row" style="top:884px;background:#f4f4f4"><div class="cb" style="left:29px;top:3px"></div><div class="c" style="left:80px">Mean Consensus Target Price</div><div class="c" style="left:340px">Analyst Ratings</div><div class="c" style="left:545px">Premium Plus</div><div class="c" style="left:645px">Stock</div><div class="c" style="left:751px;width:64px;text-align:center">No</div><div class="c" style="left:816px;width:59px;text-align:center">No</div><div class="c" style="left:876px;width:64px;text-align:center">4</div><div class="c" style="left:941px;width:124px;text-align:center">$625.53</div><div class="c" style="left:1070px">Number</div></div>
<div class="row" style="top:905px;background:#fff"><div class="cb" style="left:29px;top:3px"></div><div class="c" style="left:80px">Median Consensus Target Price</div><div class="c" style="left:340px">Analyst Ratings</div><div class="c" style="left:545px">Premium Plus</div><div class="c" style="left:645px">Stock</div><div class="c" style="left:751px;width:64px;text-align:center">No</div><div class="c" style="left:816px;width:59px;text-align:center">No</div><div class="c" style="left:876px;width:64px;text-align:center">0</div><div class="c" style="left:941px;width:124px;text-align:center">$633.50</div><div class="c" style="left:1070px">Number</div></div>
<div class="row" style="top:926px;background:#f4f4f4"><div class="cb" style="left:29px;top:3px"></div><div class="c" style="left:80px">Number of Analysts</div><div class="c" style="left:340px">Analyst Ratings</div><div class="c" style="left:545px">Premium Plus</div><div class="c" style="left:645px">Stock</div><div class="c" style="left:751px;width:64px;text-align:center">No</div><div class="c" style="left:816px;width:59px;text-align:center">No</div><div class="c" style="left:876px;width:64px;text-align:center">3</div><div class="c" style="left:941px;width:124px;text-align:center">42</div><div class="c" style="left:1070px">Number</div></div>
<div class="row" style="top:947px;background:#fff"><div class="cb" style="left:29px;top:3px"></div><div class="c" style="left:80px">Number of Buy Ratings</div><div class="c" style="left:340px">Analyst Ratings</div><div class="c" style="left:545px">Premium Plus</div><div class="c" style="left:645px">Stock</div><div class="c" style="left:751px;width:64px;text-align:center">No</div><div class="c" style="left:816px;width:59px;text-align:center">No</div><div class="c" style="left:876px;width:64px;text-align:center">0</div><div class="c" style="left:941px;width:124px;text-align:center">5</div><div class="c" style="left:1070px">Number</div></div>
<div class="a" style="left:185px;top:951px;width:1280px;height:41px;background:#ebebeb;border-top:1px solid #477aad"></div>
<div class="a" style="left:185px;top:83px;width:1px;height:869px;background:#477aad"></div>
<div class="a" style="left:1464px;top:83px;width:1px;height:869px;background:#477aad"></div>
<div class="a" style="left:1449px;top:107px;width:15px;height:844px;background:#fcfcfc"></div>
<svg class="a" style="left:1452px;top:111px" width="10" height="7" viewBox="0 0 10 7"><path d="M0 6 L5 1 L10 6Z" fill="#8a8a8a"/></svg>
<div class="a" style="left:1452px;top:124px;width:9px;height:44px;background:#8c8c8c;border-radius:4.5px"></div>
<svg class="a" style="left:1452px;top:938px" width="10" height="7" viewBox="0 0 10 7"><path d="M0 1 L5 6 L10 1Z" fill="#8a8a8a"/></svg>
<div class="a" style="left:723px;top:82px;width:105px;height:25px;border:3px solid #ed1c24"></div>
<div class="panel" style="left:1470px;width:440px"></div>
<div class="a" style="left:1470px;top:43px;width:440px;height:40px;background:#477aad"></div>
<div class="a" style="left:1479px;top:55px;font-size:14px;line-height:16px;color:#fff">5-Year EPS Growth Estimate</div>
<div class="cbw" style="left:1690px;top:57px;width:14px;height:14px"></div>
<div class="a" style="left:1715px;top:56px;font-size:12px;line-height:14px;color:#fff;font-weight:bold;letter-spacing:-0.35px">Add Metric to Returns vs. S&amp;P 500</div>
<div class="a" style="left:1481px;top:93px;font-size:12px;line-height:14px;color:#000">The per annum EPS growth estimate for the next five years.</div>
<div class="dl" style="top:133px">Metric Folder</div><div class="dr" style="top:133px">Analyst Estimates</div>
<div class="dl" style="top:152px">Plan</div><div class="dr" style="top:152px">Premium Plus</div>
<div class="dl" style="top:171px">Equity Types</div><div class="dr" style="top:171px">Stock, ETF, Fund</div>
<div class="dl" style="top:190px">Intraday Updates</div><div class="dr" style="top:190px">No, updated nightly</div>
<div class="dl" style="top:209px">History</div><div class="dr" style="top:209px">Not available</div>
<div class="dl" style="top:228px">Used in View</div><div class="dr" style="top:228px">Analyst Estimates</div>
<div class="dl" style="top:247px">Used in View</div><div class="dr" style="top:247px">Growth</div>
<div class="dl" style="top:266px">Used in View</div><div class="dr" style="top:266px">Future Growth</div>
<div class="dl" style="top:285px">Sample</div><div class="dr" style="top:285px">18.7%</div>
<div class="dl" style="top:304px">Sample Source</div><div class="dr" style="top:304px">MSFT</div>
<div class="dl" style="top:323px">Units</div><div class="dr" style="top:323px">Percentage</div>
<div class="a" style="left:1646px;top:959px;width:267px;height:26px;background:#9db3cf"></div>
<div class="a" style="left:1656px;top:965px;font-size:12px;line-height:14px;color:#e9eef4;font-weight:bold;letter-spacing:-0.33px">Add (0 selected items) to Returns vs. S&amp;P 500</div>
</body></html>
